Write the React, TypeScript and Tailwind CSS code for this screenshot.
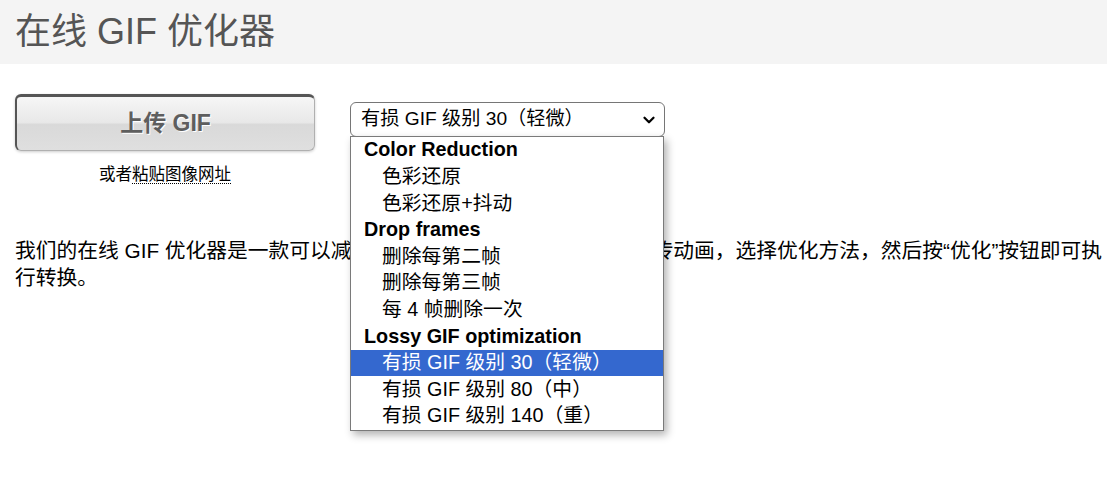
import { ChevronDown } from 'lucide-react';

const font = 'font-["Liberation_Sans","Noto_Sans_CJK_SC",sans-serif]';

type Row = { label: string; group?: boolean; selected?: boolean };

const rows: Row[] = [
  { label: 'Color Reduction', group: true },
  { label: '色彩还原' },
  { label: '色彩还原+抖动' },
  { label: 'Drop frames', group: true },
  { label: '删除每第二帧' },
  { label: '删除每第三帧' },
  { label: '每 4 帧删除一次' },
  { label: 'Lossy GIF optimization', group: true },
  { label: '有损 GIF 级别 30（轻微）', selected: true },
  { label: '有损 GIF 级别 80（中）' },
  { label: '有损 GIF 级别 140（重）' },
];

function MethodSelect() {
  return (
    <div className="relative mt-[8px] w-[315px]">
      <div className="flex h-[35px] items-center justify-between rounded-[6px] border border-[#767676] bg-white pl-[10px] pr-[6px] text-[19.2px] text-black">
        <span>有损 GIF 级别 30（轻微）</span>
        <ChevronDown className="h-[18px] w-[18px]" strokeWidth={3} />
      </div>
      {/* open option list */}
      <ul className="absolute left-0 top-[34px] z-10 w-[314px] border border-[#7a7a7a] bg-white shadow-[3px_4px_8px_rgba(0,0,0,0.3)]">
        {rows.map((r) => (
          <li
            key={r.label}
            className={
              'flex h-[26.6px] items-center whitespace-nowrap text-[19.8px] ' +
              (r.group ? 'pl-[13px] font-bold text-black' : 'pl-[31px] ') +
              (r.selected ? 'bg-[#3468cf] text-white' : !r.group ? 'text-black' : '')
            }
          >
            {r.label}
          </li>
        ))}
      </ul>
    </div>
  );
}

export default function App() {
  return (
    <div className={`min-h-[486px] bg-white ${font}`}>
      <div className="flex h-[64px] items-center bg-[#f4f4f4] px-[15px]">
        <h1 className="text-[36px] font-normal text-[#555]">在线 GIF 优化器</h1>
      </div>

      <div className="pl-[15px]">
        <div className="flex items-start gap-[35px] pt-[30px]">
          <div className="flex w-[300px] flex-col items-center">
            <button className="flex h-[57px] w-[300px] items-center justify-center rounded-[6px] border-l-2 border-t-[3px] border-b border-r border-l-[#555] border-t-[#555] border-b-[#b0b0b0] border-r-[#b0b0b0] bg-[linear-gradient(#f6f6f6,#e8e8e8_48%,#d9d9d9_52%,#dfdfdf)] text-[23px] font-bold text-[#5e5e5e] shadow-[0_1px_3px_rgba(0,0,0,0.2)] [text-shadow:1px_1px_0_#fff]">
              上传 GIF
            </button>
            <div className="mt-[12px] text-[16.5px] leading-[22px] text-black">
              或者<span className="border-b border-dotted border-black">粘贴图像网址</span>
            </div>
          </div>
          <MethodSelect />
        </div>

        <p className="mt-[52px] text-[20.75px] leading-[27px] text-black">
          我们的在线 GIF 优化器是一款可以减小 GIF 文件大小的工具。 只需上传动画，选择优化方法，然后按“优化”按钮即可执行转换。
        </p>
      </div>
    </div>
  );
}
